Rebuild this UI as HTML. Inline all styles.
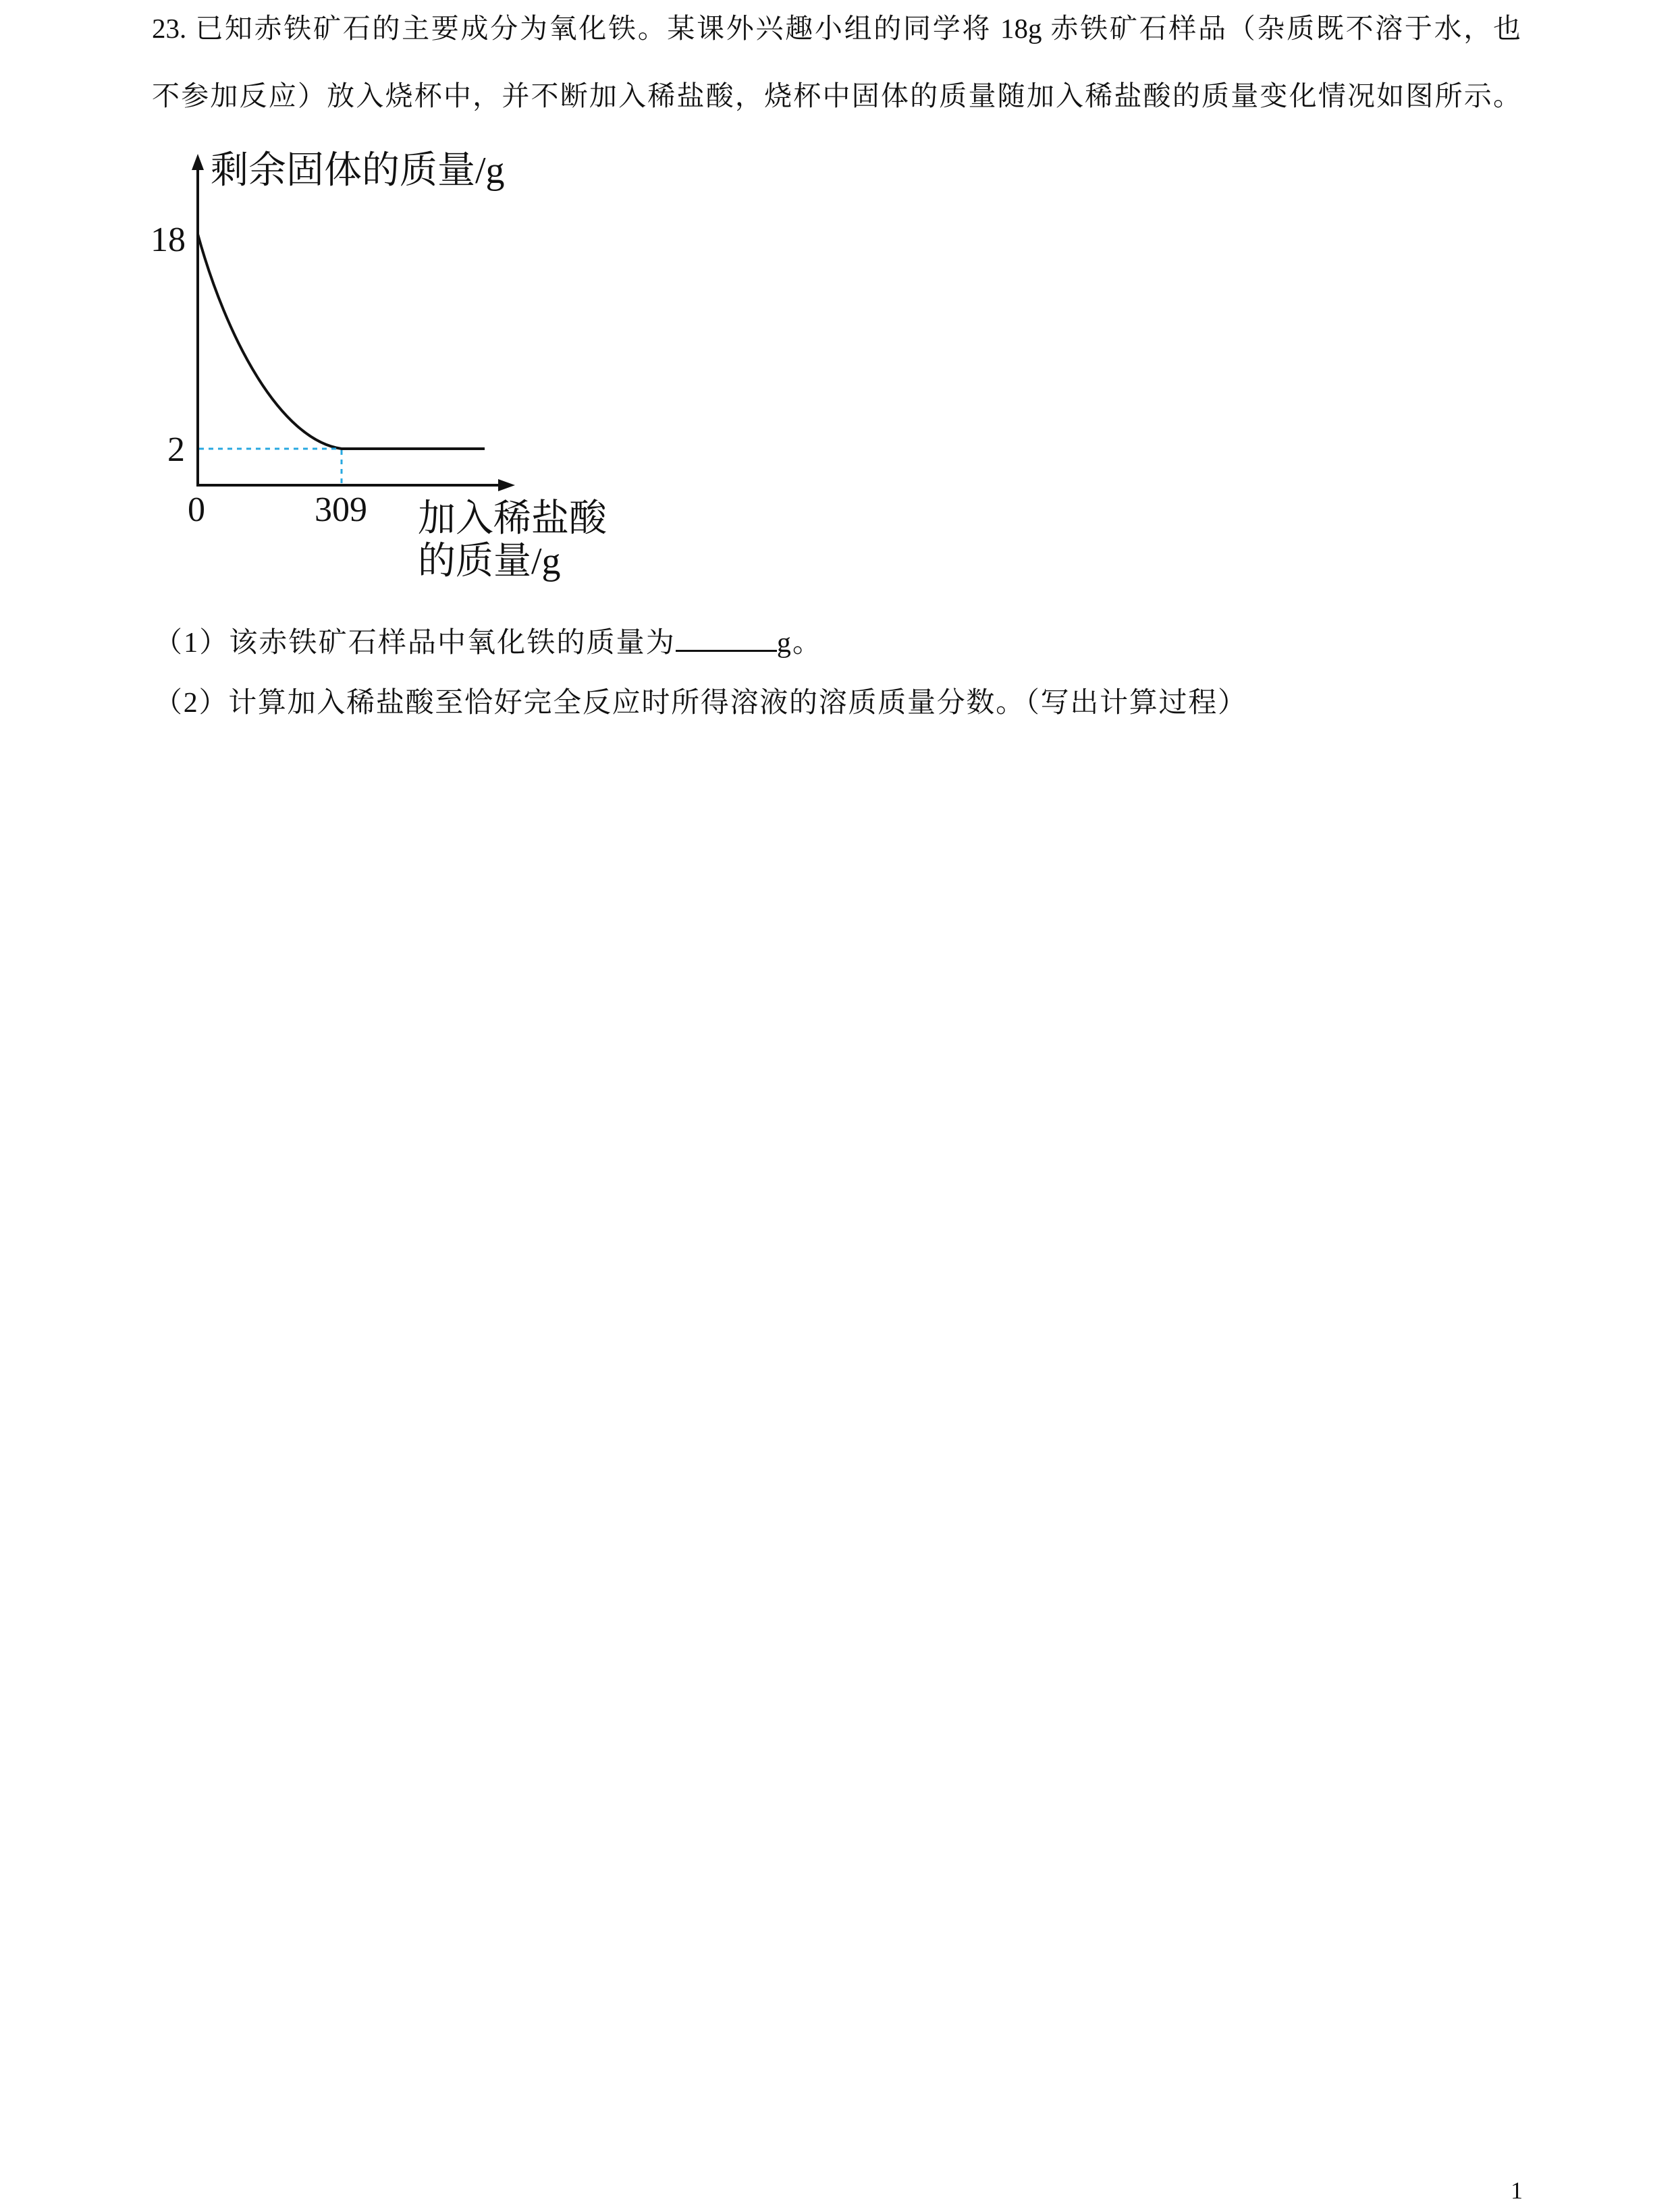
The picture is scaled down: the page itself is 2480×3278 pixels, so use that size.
<!DOCTYPE html>
<html><head><meta charset="utf-8"><style>
body{margin:0;width:2480px;height:3278px;background:#fff;position:relative;font-family:"Liberation Serif","Noto Serif CJK SC",serif;color:#111;}
.l{position:absolute;white-space:nowrap;text-align:justify;text-align-last:justify;font-size:41px;line-height:50px;}
svg{position:absolute;left:0;top:0}
</style></head><body>
<div class="l" style="left:225px;top:17px;width:2028px">23.&nbsp;已知赤铁矿石的主要成分为氧化铁。某课外兴趣小组的同学将&nbsp;18g&nbsp;赤铁矿石样品（杂质既不溶于水，也</div>
<div class="l" style="left:225px;top:117px;width:2028px">不参加反应）放入烧杯中，并不断加入稀盐酸，烧杯中固体的质量随加入稀盐酸的质量变化情况如图所示。</div>
<svg width="1000" height="900" viewBox="0 0 1000 900" font-family="Liberation Serif, Noto Serif CJK SC, serif" fill="#111">
<line x1="293" y1="240" x2="293" y2="720" stroke="#111" stroke-width="4"/>
<polygon points="293,228 284,252 302,252" fill="#111"/>
<line x1="291" y1="719" x2="750" y2="719" stroke="#111" stroke-width="4"/>
<polygon points="763,719 738,710 738,728" fill="#111"/>
<path d="M293 347 C335 500,415 652,506 665 L718 665" fill="none" stroke="#111" stroke-width="4"/>
<line x1="295" y1="665" x2="504" y2="665" stroke="#29a8e0" stroke-width="3" stroke-dasharray="7,7"/>
<line x1="506" y1="667" x2="506" y2="717" stroke="#29a8e0" stroke-width="3" stroke-dasharray="7,7"/>
<text x="312" y="271" font-size="56">剩余固体的质量/g</text>
<text x="223" y="372" font-size="52">18</text>
<text x="248" y="683" font-size="52">2</text>
<text x="278" y="772" font-size="52">0</text>
<text x="466" y="772" font-size="52">309</text>
<text x="619" y="787" font-size="56">加入稀盐酸</text>
<text x="619" y="850" font-size="56">的质量/g</text>
</svg>
<div class="l" style="left:228px;top:927px;width:988px;font-size:42px">（1）该赤铁矿石样品中氧化铁的质量为<span style="display:inline-block;width:150px;border-bottom:3px solid #111;height:36px"></span>g。</div>
<div class="l" style="left:228px;top:1017px;width:1618px;font-size:42px">（2）计算加入稀盐酸至恰好完全反应时所得溶液的溶质质量分数。（写出计算过程）</div>
<div style="position:absolute;left:2238px;top:3225px;font-size:36px">1</div>
</body></html>
